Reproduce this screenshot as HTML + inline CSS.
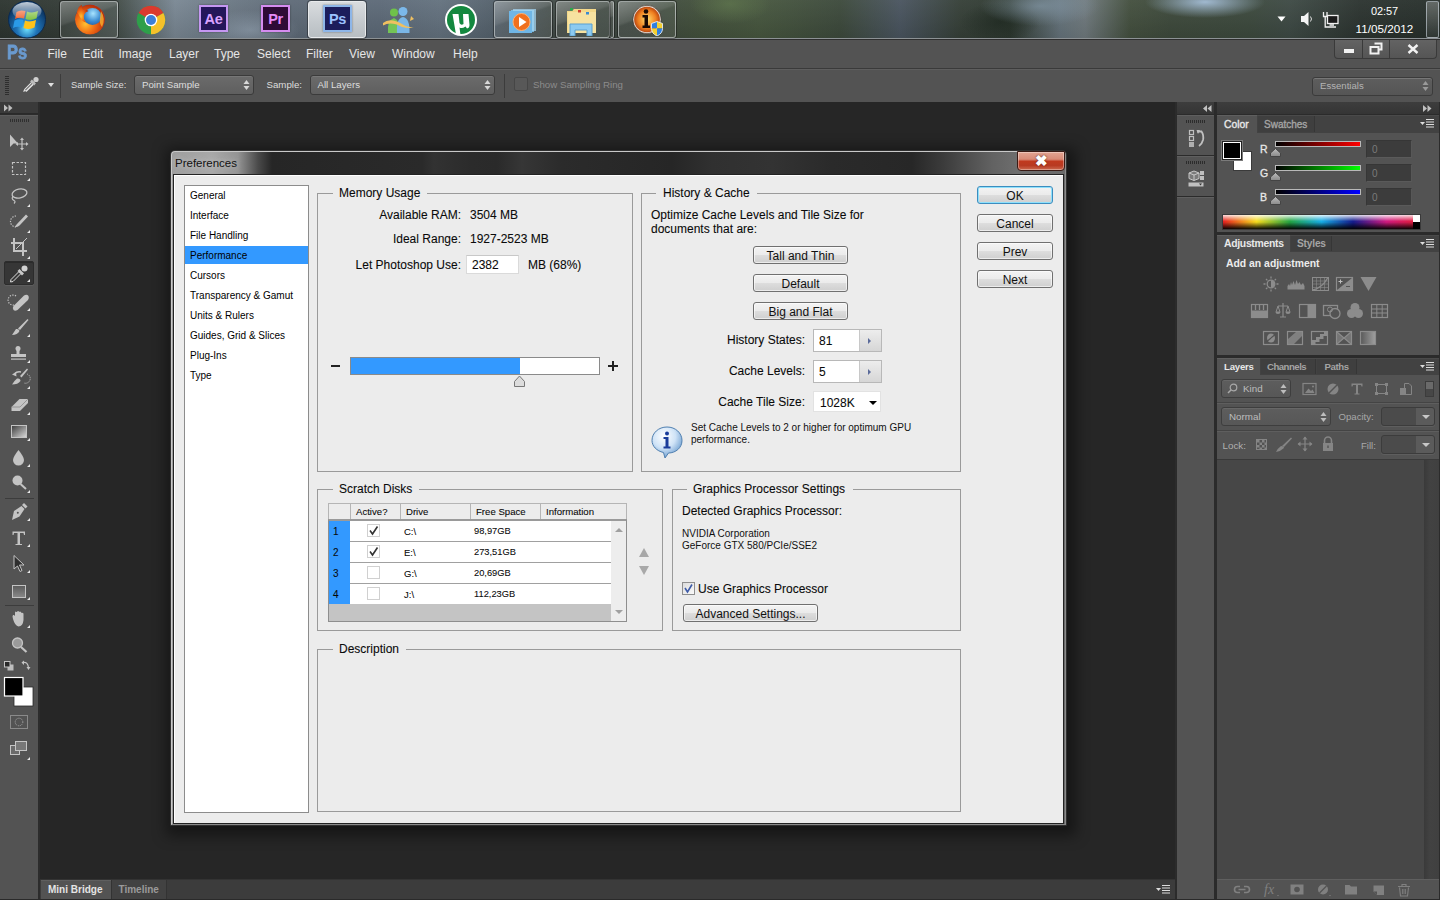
<!DOCTYPE html>
<html><head><meta charset="utf-8">
<style>
*{box-sizing:border-box}
html,body{margin:0;padding:0}
body{width:1440px;height:900px;overflow:hidden;position:relative;background:#262626;font-family:"Liberation Sans",sans-serif;}
.a{position:absolute}
.t{position:absolute;white-space:nowrap;line-height:1}

.gb{border:1px solid #9a9a9a}
.gl{height:14px;background:#ececec}
.dt{font-size:12px;color:#0a0a0a;margin-top:0.8px;-webkit-text-stroke:0.08px #000}
.st{font-size:10px;color:#0a0a0a;-webkit-text-stroke:0.08px #000}
.btn{border:1px solid #707070;border-radius:3px;background:linear-gradient(180deg,#f3f3f3 0%,#ebebeb 48%,#dddddd 52%,#cfcfcf 100%);box-shadow:inset 0 0 0 1px rgba(255,255,255,0.6);text-align:center}
.btn span{position:absolute;left:0;right:0;top:3px;font-size:12px;line-height:1;color:#111;white-space:nowrap}
.cb{width:13px;height:13px;border:1px solid #d0d0d0;background:#fff}

.mt{top:48.2px;font-size:12px;color:#e6e6e6}
.ot{color:#dedede}
.dd{border:1px solid #3b3b3b;border-radius:3px;background:linear-gradient(180deg,#6b6b6b,#5f5f5f);box-shadow:inset 0 1px 0 #777}

.grip{width:20px;height:3px;background:repeating-linear-gradient(90deg,#2c2c2c 0,#2c2c2c 1px,transparent 1px,transparent 2px)}
.tabbar{background:#424242;border-top:1px solid #4a4a4a}
.tabact{background:#535353;border-top:1px solid #5f5f5f}
.tabin{background:#3f3f3f;border-right:1px solid #363636}
.tt{font-size:10px;color:#e8e8e8}
.ti{color:#a4a4a4}
.lt{font-size:10.5px;font-weight:400;color:#e8e8e8;-webkit-text-stroke:0.3px #e8e8e8}
.sl{width:86px;height:6px;border:1px solid #b9b9b9}
.vb{width:46px;height:18px;background:#3c3c3c;border:1px solid #363636;border-bottom-color:#5a5a5a;border-right-color:#575757}
.vt{font-size:10px;color:#7a7a7a}
.ldd{border:1px solid #3e3e3e;border-radius:3px;background:linear-gradient(180deg,#5d5d5d,#575757);box-shadow:inset 0 1px 0 #676767}
.obox{width:54px;height:19px;border:1px solid #3c3c3c;border-radius:3px;background:linear-gradient(90deg,#4b4b4b 0,#4b4b4b 34px,#5b5b5b 34px);box-shadow:0 1px 0 #5e5e5e}
.obox::after{content:"";position:absolute;left:40px;top:7px;border-top:4px solid #c8c8c8;border-left:4px solid transparent;border-right:4px solid transparent}

.tbtn{border:1px solid rgba(210,215,215,0.6);border-radius:3px;box-shadow:0 0 0 1px rgba(0,0,0,0.35);background:linear-gradient(160deg,rgba(255,255,255,0.32) 0%,rgba(255,255,255,0.14) 40%,rgba(255,255,255,0.06) 45%,rgba(255,255,255,0.08) 100%)}
.tbtn.act{border-color:#e8eaec;background:linear-gradient(180deg,#d9dcdf 0%,#c4c9cd 60%,#b8bec2 100%)}
.adb{width:29px;height:27px;border:2px solid;box-shadow:0 0 2px rgba(0,0,0,0.4)}
.adb span{position:absolute;left:0;right:0;top:4.5px;text-align:center;font-size:14.5px;font-weight:700;line-height:1;letter-spacing:-0.3px}
</style></head><body>

<!-- ============ TASKBAR ============ -->
<div class="a" id="taskbar" style="left:0;top:0;width:1440px;height:39px;overflow:hidden;background:#3c4640">
 <div class="a" style="left:0;top:0;width:1440px;height:38px;
 background:
 radial-gradient(ellipse 60px 16px at 1205px 2px,rgba(165,190,215,0.95),rgba(165,190,215,0) 100%),
 radial-gradient(ellipse 60px 20px at 1040px 6px,rgba(130,150,165,0.7),rgba(130,150,165,0) 100%),
 radial-gradient(ellipse 50px 20px at 250px 30px,rgba(150,165,180,0.55),rgba(150,165,180,0) 100%),
 radial-gradient(ellipse 40px 20px at 730px 4px,rgba(100,125,80,0.6),rgba(100,125,80,0) 100%),
 radial-gradient(ellipse 40px 20px at 1000px 22px,rgba(30,40,32,0.7),rgba(30,40,32,0) 100%),
 linear-gradient(180deg,rgba(255,255,255,0.04) 0%,rgba(0,0,0,0.10) 100%),
 linear-gradient(90deg,#2d3530 0px,#333b36 60px,#46504c 120px,#7a8894 175px,#6f7c88 215px,#5f6b78 290px,#5d6a78 380px,#64727f 440px,#56636e 490px,#414a45 560px,#3e4840 640px,#43513c 700px,#47573f 760px,#3d4a3c 840px,#4a5560 900px,#364038 960px,#2f3a31 1010px,#66747c 1060px,#707a7e 1085px,#44503f 1130px,#3e4a3c 1170px,#3d4a3e 1250px,#3e4a45 1290px,#2c3430 1360px,#28302c 1440px);"></div>
 <div class="a" style="left:0;top:38px;width:1440px;height:1px;background:#8c9194"></div>
 <!-- start orb -->
 <svg class="a" style="left:6px;top:0" width="42" height="39" viewBox="0 0 42 39">
  <defs>
   <radialGradient id="orb" cx="50%" cy="75%" r="60%"><stop offset="0" stop-color="#6fe2ff"/><stop offset="0.45" stop-color="#1f74b8"/><stop offset="1" stop-color="#0d3a6a"/></radialGradient>
   <linearGradient id="orbg" x1="0" y1="0" x2="0" y2="1"><stop offset="0" stop-color="#ffffff" stop-opacity="0.75"/><stop offset="1" stop-color="#ffffff" stop-opacity="0.05"/></linearGradient>
  </defs>
  <circle cx="21" cy="19.5" r="18.5" fill="url(#orb)" stroke="#0b2a50" stroke-width="1"/>
  <path d="M10.5 12 Q14 9.5 19.5 11 L18 18.5 Q13 17 9 19 Z" fill="#f0602a"/>
  <path d="M21 11.5 Q26 13.5 32 11 L30.5 18.5 Q25 21 19.5 19 Z" fill="#7cc03a"/>
  <path d="M8.5 20.5 Q13 18.5 17.5 20 L16 27.5 Q11.5 26 7 28 Z" fill="#2a9ae8"/>
  <path d="M19 20.5 Q24 22.5 30 20 L28.5 27.5 Q23.5 30 17.5 28 Z" fill="#ffc21a"/>
  <ellipse cx="21" cy="11" rx="14.5" ry="9" fill="url(#orbg)"/>
 </svg>
 <!-- buttons -->
 <div class="a tbtn" style="left:60px;top:1px;width:58px;height:37px"></div>
 <div class="a tbtn act" style="left:308px;top:1px;width:58px;height:37px"></div>
 <div class="a tbtn" style="left:494px;top:1px;width:58px;height:37px"></div>
 <div class="a tbtn" style="left:556px;top:1px;width:54px;height:37px"></div>
 <div class="a tbtn" style="left:610px;top:1px;width:4px;height:37px;border-left:none"></div>
 <div class="a tbtn" style="left:618px;top:1px;width:58px;height:37px"></div>
 <!-- firefox -->
 <svg class="a" style="left:73px;top:3px" width="33" height="33" viewBox="0 0 33 33">
  <defs><radialGradient id="ffg" cx="60%" cy="30%" r="60%"><stop offset="0" stop-color="#a8e4ff"/><stop offset="0.45" stop-color="#3a8ad0"/><stop offset="1" stop-color="#14306e"/></radialGradient>
  <radialGradient id="ffo" cx="35%" cy="65%" r="65%"><stop offset="0" stop-color="#ffc030"/><stop offset="0.5" stop-color="#f06a14"/><stop offset="1" stop-color="#b8300c"/></radialGradient></defs>
  <circle cx="17" cy="16.5" r="15" fill="url(#ffg)"/>
  <path fill-rule="evenodd" fill="url(#ffo)" d="M17 1.5 A15 15 0 1 1 16.99 1.5 Z M19.5 13.5 m-9 0 a9 8.5 0 1 0 18 0 a9 8.5 0 1 0 -18 0 Z"/>
  <path d="M4 9 Q5 3 9 2 Q8.5 5 10 7 Q13 6 15.5 8 Q12 9 11 12 Q10 16 13 19.5 Q9 18.5 7.5 15 Z" fill="url(#ffo)"/>
  <path d="M28 8 Q33 16 29 24 Q26 20 27 15 Z" fill="#f8b030" opacity="0.8"/>
 </svg>
 <!-- chrome -->
 <svg class="a" style="left:136px;top:5px" width="30" height="30" viewBox="0 0 30 30">
  <circle cx="15" cy="15" r="14.3" fill="#2e9f4a"/>
  <path d="M15 15 L2.6 7.9 A14.3 14.3 0 0 1 27.4 7.9 Z" fill="#dc3a2e"/>
  <path d="M15 15 L27.4 7.9 A14.3 14.3 0 0 1 15 29.3 Z" fill="#f6c12a"/>
  <circle cx="15" cy="15" r="6.3" fill="#fff"/><circle cx="15" cy="15" r="5" fill="#3d7fd8"/>
 </svg>
 <!-- Ae Pr Ps -->
 <div class="a adb" style="left:199px;top:5px;border-color:#c597f2;background:#24165a"><span style="color:#d9a2ff">Ae</span></div>
 <div class="a adb" style="left:261px;top:5px;border-color:#d58cf0;background:#2e0b36"><span style="color:#e58af8">Pr</span></div>
 <div class="a adb" style="left:323px;top:5px;border-color:#8eb6e8;background:#1c1d5c"><span style="color:#9cc2ff">Ps</span></div>
 <!-- messenger -->
 <svg class="a" style="left:382px;top:7px" width="34" height="27" viewBox="0 0 34 27">
  <circle cx="12" cy="5.5" r="4" fill="#6fc24a"/><path d="M6 26 Q5 13 12 11 Q18 13 17.5 26 Z" fill="#74c456"/>
  <circle cx="21" cy="4.5" r="4.5" fill="#7bb8ea"/><path d="M15 26 Q14 11 21 10 Q28 11 27.5 26 Z" fill="#7ab6e6"/>
  <path d="M1 16 Q8 10 20 17 Q27 21 32 20 Q28 22 20 20 Q9 14 1 18.5 Z" fill="#f0c060"/><path d="M29 9 L32 12 L28 14 Z" fill="#f0c060"/>
 </svg>
 <!-- utorrent -->
 <svg class="a" style="left:444px;top:3px" width="34" height="34" viewBox="0 0 34 34">
  <circle cx="17" cy="17" r="16" fill="#fff"/><circle cx="17" cy="17" r="14" fill="#14883f"/>
  <path d="M8.5 11 L14.5 11 L15.5 20 Q17 23 19.5 21 L19 11 L24.5 11 L25.5 22 Q25.5 25 23 25.5 L21.5 23.5 Q18 26 15.5 24.5 L16.5 32 L12 31.5 Z" fill="#fff"/>
 </svg>
 <!-- wmp -->
 <svg class="a" style="left:507px;top:7px" width="32" height="28" viewBox="0 0 32 28">
  <path d="M4 3 H27 V25 H4 Z" fill="#7cc4ef" opacity="0.85"/><path d="M6 2 H29 V24 H6Z" fill="#a7d8f6" opacity="0.7"/><path d="M2 4 H25 V26 H2 Z" fill="#6fb6e6"/>
  <circle cx="14.5" cy="15" r="8.5" fill="#f0701e"/><circle cx="14.5" cy="15" r="8.5" fill="none" stroke="#ffb070" stroke-width="1"/>
  <path d="M12 10 L19.5 15 L12 20 Z" fill="#fff"/>
 </svg>
 <!-- explorer -->
 <svg class="a" style="left:566px;top:7px" width="32" height="29" viewBox="0 0 32 29">
  <path d="M1 4 H6 L8 2 H30 V26 H1 Z" fill="#f3d88a"/><path d="M2 5 H30 V26 H2 Z" fill="#f7e2a0"/>
  <rect x="4" y="1" width="3" height="2.5" fill="#2aa84a"/><rect x="12" y="3" width="3" height="2.5" fill="#d04030"/><rect x="20" y="5" width="3" height="2.5" fill="#3a8ad0"/>
  <path d="M4 29 V17 H26 V29 H21 V23 H9 V29 Z" fill="#8ccaf0" stroke="#5aa0d0" stroke-width="1"/>
 </svg>
 <!-- info -->
 <svg class="a" style="left:631px;top:4px" width="34" height="32" viewBox="0 0 34 32">
  <defs><radialGradient id="inf" cx="50%" cy="50%" r="55%"><stop offset="0" stop-color="#ffe070"/><stop offset="0.6" stop-color="#f08020"/><stop offset="1" stop-color="#a02a08"/></radialGradient></defs>
  <circle cx="16" cy="15.5" r="13.5" fill="url(#inf)" stroke="#e8e0d8" stroke-width="1.3"/>
  <circle cx="15" cy="7.5" r="2.3" fill="#1a0a04"/><path d="M11.5 11 H17 V21.5 H19 V24 H11.5 V21.5 H13.5 V13.5 H11.5Z" fill="#1a0a04"/>
  <defs><clipPath id="shc"><path d="M20.5 19.5 L26 17.5 L31.5 19.5 V24.5 Q31.5 29.5 26 32 Q20.5 29.5 20.5 24.5 Z"/></clipPath></defs>
  <circle cx="16" cy="15.5" r="14.2" fill="none" stroke="#2a1a10" stroke-width="0.8" opacity="0.7"/>
  <g clip-path="url(#shc)"><rect x="20" y="17" width="6" height="7.5" fill="#2f7fe0"/><rect x="26" y="17" width="6" height="7.5" fill="#f4d030"/><rect x="20" y="24.5" width="6" height="8" fill="#f4d030"/><rect x="26" y="24.5" width="6" height="8" fill="#2f7fe0"/></g>
  <path d="M20.5 19.5 L26 17.5 L31.5 19.5 V24.5 Q31.5 29.5 26 32 Q20.5 29.5 20.5 24.5 Z" fill="none" stroke="#e8eef4" stroke-width="0.9"/>
 </svg>
 <!-- tray -->
 <svg class="a" style="left:1277px;top:16px" width="9" height="6"><path d="M0.5 0.5 H8.5 L4.5 5.5Z" fill="#fff"/></svg>
 <svg class="a" style="left:1300px;top:11px" width="14" height="16" viewBox="0 0 14 16"><path d="M1 5 H4 L8.5 1 V15 L4 11 H1Z" fill="#f4f4f4"/><path d="M10.5 5.5 Q12.5 8 10.5 10.5" fill="none" stroke="#e0e0e0" stroke-width="1"/></svg>
 <svg class="a" style="left:1322px;top:11px" width="17" height="17" viewBox="0 0 17 17"><path d="M1.5 1 V5.5 H5 V1 M3.2 5.5 V16 H14 M7.5 14 H12" fill="none" stroke="#f0f0f0" stroke-width="1.3"/><rect x="5.5" y="4.5" width="10.5" height="8" fill="#1a1a1a" stroke="#f0f0f0" stroke-width="1.3"/></svg>
 <div class="t" style="left:1371px;top:6px;font-size:11px;color:#fff;letter-spacing:-0.1px">02:57</div>
 <div class="t" style="left:1355.5px;top:22.5px;font-size:11.7px;color:#fff">11/05/2012</div>
 <div class="a" style="left:1426px;top:1px;width:13px;height:37px;border:1px solid rgba(220,230,240,0.55);border-radius:2px;background:linear-gradient(180deg,rgba(255,255,255,0.25),rgba(255,255,255,0.05))"></div>
</div>
<div class="a" style="left:0;top:39px;width:1440px;height:1px;background:#2e2e2e"></div>

<!-- ============ MENUBAR ============ -->
<div class="a" id="menubar" style="left:0;top:40px;width:1440px;height:28px;background:#535353;"></div>
<div class="a" style="left:0;top:68px;width:1440px;height:1px;background:#3a3a3a"></div>

<!-- ============ OPTIONS BAR ============ -->
<div class="a" id="optbar" style="left:0;top:69px;width:1440px;height:33px;background:#535353;border-top:1px solid #5e5e5e"></div>


<!-- menubar content -->
<div class="t" style="left:7px;top:41.7px;font-size:20.5px;font-weight:700;color:#6a9acf;-webkit-text-stroke:0.8px #6a9acf;transform:scaleX(0.8);transform-origin:0 0">Ps</div>
<div class="t mt" style="left:47.5px">File</div>
<div class="t mt" style="left:82.5px">Edit</div>
<div class="t mt" style="left:118.5px">Image</div>
<div class="t mt" style="left:169px">Layer</div>
<div class="t mt" style="left:214px">Type</div>
<div class="t mt" style="left:257px">Select</div>
<div class="t mt" style="left:306px">Filter</div>
<div class="t mt" style="left:349px">View</div>
<div class="t mt" style="left:392px">Window</div>
<div class="t mt" style="left:453px">Help</div>
<div class="a" style="left:1334px;top:40px;width:103px;height:19px;border:1px solid #3a3a3a;border-top:none;border-radius:0 0 4px 4px;background:linear-gradient(180deg,#636363,#555555)"></div>
<div class="a" style="left:1362px;top:40px;width:1px;height:18px;background:#3a3a3a"></div>
<div class="a" style="left:1389px;top:40px;width:1px;height:18px;background:#3a3a3a"></div>
<div class="a" style="left:1344px;top:49px;width:10px;height:4px;background:#f2f2f2"></div>
<svg class="a" style="left:1369px;top:42px" width="14" height="13" viewBox="0 0 14 13"><path d="M5.5 1.5 H12.5 V7.5 H10" fill="none" stroke="#f2f2f2" stroke-width="2"/><rect x="1.5" y="5" width="8" height="6.5" fill="none" stroke="#f2f2f2" stroke-width="2"/></svg>
<svg class="a" style="left:1407px;top:44px" width="12" height="10" viewBox="0 0 12 10"><path d="M1.5 1 L10.5 9 M10.5 1 L1.5 9" stroke="#f2f2f2" stroke-width="2.4"/></svg>

<!-- options bar content -->
<div class="a" style="left:5px;top:76px;width:4px;height:20px;background:repeating-linear-gradient(180deg,#2e2e2e 0,#2e2e2e 1px,transparent 1px,transparent 2px)"></div>
<svg class="a" style="left:22px;top:75px" width="18" height="18" viewBox="0 0 18 18"><path d="M2.5 15.5 L10 8 M4 16.5 L11 9.5" stroke="#d8d8d8" stroke-width="1.3"/><path d="M2 16 L3 14 L10.5 6.5 L12 8 L4.5 15.5 Z" fill="#555" stroke="#e0e0e0" stroke-width="1.1"/><path d="M9 5.5 L13 9.5" stroke="#bdbdbd" stroke-width="2.5"/><circle cx="14" cy="4.5" r="2.6" fill="#cfcfcf"/></svg>
<div class="a" style="left:48px;top:83px;width:0;height:0;border-top:4px solid #e0e0e0;border-left:3.5px solid transparent;border-right:3.5px solid transparent"></div>
<div class="a" style="left:60px;top:74px;width:1px;height:24px;background:#3c3c3c"></div>
<div class="t ot" style="left:71px;top:80px;font-size:9.4px">Sample Size:</div>
<div class="a dd" style="left:134px;top:75px;width:120px;height:20px"></div>
<div class="t ot" style="left:142px;top:80px;font-size:9.7px">Point Sample</div>
<svg class="a ud" style="left:243px;top:79px" width="7" height="12"><path d="M0.5 5 L3.5 1 L6.5 5 Z M0.5 7 L3.5 11 L6.5 7 Z" fill="#d8d8d8"/></svg>
<div class="t ot" style="left:266.5px;top:80px;font-size:9.7px">Sample:</div>
<div class="a dd" style="left:310px;top:75px;width:185px;height:20px"></div>
<div class="t ot" style="left:317.5px;top:80px;font-size:9.7px">All Layers</div>
<svg class="a ud" style="left:484px;top:79px" width="7" height="12"><path d="M0.5 5 L3.5 1 L6.5 5 Z M0.5 7 L3.5 11 L6.5 7 Z" fill="#d8d8d8"/></svg>
<div class="a" style="left:504px;top:74px;width:1px;height:24px;background:#3c3c3c"></div>
<div class="a" style="left:514px;top:77px;width:14px;height:14px;border:1px solid #464646;border-radius:2px;background:#585858"></div>
<div class="t ot" style="left:533px;top:80px;font-size:9.7px;color:#8c8c8c">Show Sampling Ring</div>
<div class="a dd" style="left:1312px;top:77px;width:121px;height:19px;background:linear-gradient(180deg,#5e5e5e,#555)"></div>
<div class="t ot" style="left:1320px;top:81px;font-size:9.6px;color:#b4b4b4">Essentials</div>
<svg class="a ud" style="left:1422px;top:80px" width="7" height="12"><path d="M0.5 5 L3.5 1 L6.5 5 Z M0.5 7 L3.5 11 L6.5 7 Z" fill="#9a9a9a"/></svg>
<!-- ============ LEFT TOOLBAR ============ -->
<div class="a" style="left:0;top:102px;width:40px;height:798px;background:#2c2c2c"></div>
<div class="a" id="tbhead" style="left:0;top:102px;width:38px;height:12px;background:#3a3a3a;border-bottom:1px solid #2a2a2a"></div>
<div class="a" id="toolbar" style="left:0;top:115px;width:38px;height:785px;background:#535353;border-top:1px solid #5d5d5d"></div>


<!-- toolbar content -->
<svg class="a" style="left:0;top:102px" width="40" height="660" viewBox="0 102 40 660">
 <g fill="#c4c4c4" stroke="none">
  <!-- head arrows -->
  <path d="M4 104.5 L8 108 L4 111.5 Z M8.5 104.5 L12.5 108 L8.5 111.5 Z" fill="#bdbdbd"/>
  <!-- grip -->
  <path d="M10 119 h1 v3 h-1z M12 119 h1 v3 h-1z M14 119 h1 v3 h-1z M16 119 h1 v3 h-1z M18 119 h1 v3 h-1z M20 119 h1 v3 h-1z M22 119 h1 v3 h-1z M24 119 h1 v3 h-1z M26 119 h1 v3 h-1z M28 119 h1 v3 h-1z" fill="#2f2f2f"/>
  <!-- move -->
  <path d="M10 134.5 L10 147 L13.5 143.5 L18 143.5 Z"/>
  <path d="M22 139 v10 M17 144 h10" stroke="#c4c4c4" stroke-width="1.2"/>
  <path d="M22 137.5 l-2 2.5 h4z M22 150.5 l-2 -2.5 h4z M15.5 144 l2.5 -2 v4z M28.5 144 l-2.5 -2 v4z"/>
  <!-- marquee -->
  <rect x="12.5" y="162.5" width="13" height="12" fill="none" stroke="#c4c4c4" stroke-width="1.2" stroke-dasharray="2.5 1.5"/>
  <!-- lasso -->
  <ellipse cx="19.5" cy="193.5" rx="7.5" ry="4.5" fill="none" stroke="#c4c4c4" stroke-width="1.3" transform="rotate(-12 19.5 193.5)"/>
  <path d="M13 196 q-2 3 1 4.5 q2 1 0 3" fill="none" stroke="#c4c4c4" stroke-width="1.2"/>
  <!-- quick select -->
  <path d="M16 216 a5.5 5.5 0 1 0 0 11" fill="none" stroke="#c4c4c4" stroke-width="1.2" stroke-dasharray="1.3 1.3"/>
  <path d="M17 224 L26 214.5 L28 216.5 L19.5 225.5 Q16 228 15 226.5 Z"/>
  <!-- crop -->
  <path d="M14 238 V251 H27 M11 243 H23 V256" fill="none" stroke="#c4c4c4" stroke-width="2"/>
  <path d="M16 249 L27 238" stroke="#c4c4c4" stroke-width="1"/>
  <!-- eyedropper selected bg -->
  <!-- heal -->
  <path d="M16 296 a5 5 0 1 0 -2 9" fill="none" stroke="#c4c4c4" stroke-width="1.2" stroke-dasharray="1.3 1.3"/>
  <path d="M13.5 306 L24 295.5 Q27 294 28.5 296 Q29.5 298.5 28 300 L17.5 310 Q15 311.5 13.5 310 Q12 308.5 13.5 306 Z"/>
  <!-- brush -->
  <g transform="translate(0 3)"><path d="M18 325.5 L27.5 316 L28.5 317 L20 327 Z"/>
  <path d="M12 332 Q14 329 16 326 Q19 325.5 19.5 328 Q17.5 332 12 332 Z"/></g>
  <!-- stamp -->
  <g transform="translate(0 2)"><circle cx="18" cy="346.5" r="2.5"/><rect x="16.5" y="348" width="3" height="4"/><rect x="11" y="352" width="15" height="3"/><rect x="11" y="356.5" width="15" height="1.2"/></g>
  <!-- history brush -->
  <path d="M20 376 L27 368.5 L28 369.5 L21.5 377.5 Z"/><path d="M12 384.5 Q14 381 17 378.5 Q20.5 378 20.5 381 Q18 384.5 12 384.5 Z"/>
  <path d="M21 372 Q17 371 14.5 374" fill="none" stroke="#c4c4c4" stroke-width="1.3"/><path d="M12 374.5 L16 372 L16.5 376.5 Z"/>
  <path d="M27 374 a4 4 0 0 1 -3 9" fill="none" stroke="#c4c4c4" stroke-width="1" stroke-dasharray="1 1"/>
  <!-- eraser -->
  <path d="M11.5 407 L19.5 399 L28 399 L28 403 L20 411 L11.5 411 Z"/>
  <path d="M11.5 407 L20 407 L28 399" fill="none" stroke="#8a8a8a" stroke-width="0.8"/>
  <!-- gradient -->
  <defs><linearGradient id="gr" x1="0" y1="0" x2="1" y2="1"><stop offset="0" stop-color="#3a3a3a"/><stop offset="1" stop-color="#dcdcdc"/></linearGradient>
  <linearGradient id="gr2" x1="0" y1="0" x2="0" y2="1"><stop offset="0" stop-color="#5a5a5a"/><stop offset="1" stop-color="#8a8a8a"/></linearGradient></defs>
  <rect x="11.5" y="425.5" width="15" height="12" fill="url(#gr)" stroke="#c4c4c4" stroke-width="1"/>
  <!-- drop -->
  <path d="M18.5 450 Q13 457 13 460 A5.5 5.5 0 0 0 24 460 Q24 457 18.5 450 Z"/>
  <!-- dodge -->
  <circle cx="17.5" cy="480.5" r="5"/><path d="M20.5 484 L26 489" stroke="#c4c4c4" stroke-width="2"/>
  <!-- sep -->
  <rect x="5" y="498" width="29" height="1" fill="#3c3c3c"/>
  <!-- pen -->
  <path d="M12 520 L14 511 L21.5 506 L24.5 509 L19.5 516.5 Z"/><path d="M22 505 L24 503 L27.5 506.5 L25.5 508.5 Z"/><circle cx="17.8" cy="512.8" r="1" fill="#535353"/>
  <!-- type -->
  <path d="M12.5 531.5 H25 V535 H24 L23.5 533 H20 V544 H22 V545 H15.5 V544 H17.5 V533 H14 L13.5 535 H12.5 Z"/>
  <!-- path select -->
  <path d="M14 555.5 V569 L17.5 566 L20 571.5 L22 570.5 L19.5 565 L24 565 Z" fill="#2e2e2e" stroke="#c4c4c4" stroke-width="1"/>
  <!-- rect -->
  <rect x="12.5" y="585.5" width="13" height="12" fill="url(#gr2)" stroke="#c4c4c4" stroke-width="1"/>
  <rect x="5" y="605" width="29" height="1" fill="#3c3c3c"/>
  <!-- hand -->
  <path d="M13 619 Q12 616 13 615 Q14 614.5 15 616 L15 612.5 Q15.5 611 16.5 612 L17 612 Q17.5 610.5 18.5 611 L19 612 Q20 611 21 612 L21.5 613 Q22.5 612.5 23.5 613.5 L23.5 620 Q23 626 18.5 626.5 Q15 626 13 619 Z"/>
  <!-- zoom -->
  <circle cx="17.5" cy="643" r="5" fill="#9a9a9a" stroke="#c4c4c4" stroke-width="1.3"/><path d="M21 647 L26.5 652" stroke="#c4c4c4" stroke-width="2.2"/>
  <!-- default colors -->
  <rect x="7.5" y="664.5" width="6" height="6" fill="#bdbdbd"/><rect x="4.5" y="661.5" width="5.5" height="5.5" fill="#2a2a2a" stroke="#c4c4c4" stroke-width="1"/>
  <path d="M23 662.5 Q28 661.5 28.5 668" fill="none" stroke="#c4c4c4" stroke-width="1.2"/><path d="M21.5 662.5 L24 660.5 L24 665z M26.5 667 L30.5 667 L28.5 670z"/>
  <!-- fg/bg -->
  <rect x="14" y="687" width="19" height="19" fill="#fff" stroke="#2a2a2a" stroke-width="0.8"/>
  <rect x="4.5" y="677.5" width="18.5" height="18.5" fill="#000" stroke="#fff" stroke-width="1.2"/>
  <!-- quick mask -->
  <rect x="10.5" y="715.5" width="17" height="13" fill="none" stroke="#8a8a8a" stroke-width="1"/><circle cx="19" cy="722" r="3.8" fill="none" stroke="#a8a8a8" stroke-width="1" stroke-dasharray="1 1"/>
  <!-- screen mode -->
  <rect x="10.5" y="745.5" width="9" height="9" fill="#6a6a6a" stroke="#c4c4c4" stroke-width="1"/><rect x="15.5" y="741.5" width="11" height="9" fill="#777" stroke="#c4c4c4" stroke-width="1"/>
 </g>
 <g fill="#e8e8e8">
  <path d="M30 178 l-3 3 h3z M30 204 l-3 3 h3z M30 230 l-3 3 h3z M30 256 l-3 3 h3z M30 308 l-3 3 h3z M30 334 l-3 3 h3z M30 360 l-3 3 h3z M30 386 l-3 3 h3z M30 412 l-3 3 h3z M30 438 l-3 3 h3z M30 464 l-3 3 h3z M30 490 l-3 3 h3z M30 518 l-3 3 h3z M30 544 l-3 3 h3z M30 570 l-3 3 h3z M30 597 l-3 3 h3z M30 625 l-3 3 h3z M30 757 l-3 3 h3z"/>
 </g>
</svg>
<div class="a" style="left:4px;top:261px;width:30px;height:24px;border-radius:2px;background:#363636;border:1px solid #2c2c2c;box-shadow:inset 0 1px 0 #2a2a2a, 0 1px 0 #5e5e5e"></div>
<svg class="a" style="left:4px;top:261px" width="30" height="24" viewBox="4 261 30 24">
 <path d="M11 281 L20 272" stroke="#d8d8d8" stroke-width="1.2"/><path d="M10.5 282 L11 279.5 L19 271.5 L21 273.5 L13 281.5 Z" fill="#3a3a3a" stroke="#dcdcdc" stroke-width="1"/>
 <path d="M18.5 270 L23 274.5" stroke="#c8c8c8" stroke-width="2.8"/><circle cx="24.5" cy="268.5" r="3" fill="#d0d0d0"/>
 <path d="M30 279 l-3 3 h3z" fill="#e8e8e8"/>
</svg>
<!-- ============ RIGHT DOCK ============ -->
<div class="a" style="left:1175px;top:102px;width:265px;height:798px;background:#2b2b2b"></div>
<div class="a" style="left:1177px;top:102px;width:37px;height:12px;background:linear-gradient(180deg,#3d3d3d,#353535)"></div>
<div class="a" style="left:1217px;top:102px;width:223px;height:12px;background:linear-gradient(180deg,#3d3d3d,#353535)"></div>
<svg class="a" style="left:1203px;top:105px" width="9" height="7"><path d="M4 0 L0 3.5 L4 7Z M8.5 0 L4.5 3.5 L8.5 7Z" fill="#c0c0c0"/></svg>
<svg class="a" style="left:1423px;top:105px" width="9" height="7"><path d="M0 0 L4 3.5 L0 7Z M4.5 0 L8.5 3.5 L4.5 7Z" fill="#c0c0c0"/></svg>
<!-- dock column -->
<div class="a" style="left:1177px;top:115px;width:37px;height:40px;background:#535353;border-top:1px solid #5f5f5f"></div>
<div class="a" style="left:1177px;top:156px;width:37px;height:40px;background:#535353;border-top:1px solid #5f5f5f"></div>
<div class="a" style="left:1177px;top:197px;width:37px;height:703px;background:#535353;border-top:1px solid #5f5f5f"></div>
<div class="a grip" style="left:1186px;top:120px"></div>
<div class="a grip" style="left:1186px;top:161px"></div>
<svg class="a" style="left:1188px;top:129px" width="18" height="19" viewBox="0 0 18 19"><rect x="1.5" y="1.5" width="4" height="4" fill="none" stroke="#c0c0c0" stroke-width="1.2"/><rect x="1.5" y="7.5" width="4" height="4" fill="none" stroke="#c0c0c0" stroke-width="1.2"/><rect x="1" y="13" width="5" height="5" fill="#b0b0b0"/><path d="M9 2.5 H13.5 Q16 6 15 11 Q14 15 11 17" fill="none" stroke="#c0c0c0" stroke-width="1.8"/><path d="M8.5 1 L12 1 L10 5 Z" fill="#c0c0c0"/></svg>
<svg class="a" style="left:1188px;top:170px" width="18" height="18" viewBox="0 0 18 18"><path d="M6 1 L11 3 L11 8.5 L6 10.5 L1 8.5 L1 3 Z" fill="#7a7a7a" stroke="#c8c8c8" stroke-width="1"/><path d="M1 3 L6 5 L11 3 M6 5 V10.5" stroke="#c8c8c8" stroke-width="1" fill="none"/><rect x="12" y="1" width="4" height="4" fill="#c0c0c0"/><rect x="12" y="6" width="4" height="4" fill="#c0c0c0"/><rect x="0.5" y="12.5" width="15" height="4" fill="#c0c0c0"/><path d="M11 13.5 L14 13.5 L12.5 15.5Z" fill="#333"/></svg>

<!-- ===== Color panel ===== -->
<div class="a tabbar" style="left:1217px;top:115px;width:222px;height:18px"></div>
<div class="a tabact" style="left:1217px;top:115px;width:40px;height:18px"></div>
<div class="a tabin" style="left:1258px;top:116px;width:57px;height:16px"></div>
<div class="t tt" style="left:1224px;top:119.5px;font-size:10.3px;-webkit-text-stroke:0.35px #e8e8e8">Color</div>
<div class="t tt ti" style="left:1264px;top:119.5px;-webkit-text-stroke:0.35px #a4a4a4">Swatches</div>
<svg class="a pm" style="left:1420px;top:119px" width="15" height="9"><path d="M0 3 L5 3 L2.5 6Z" fill="#dcdcdc"/><path d="M6 0.5 H14 M6 3 H14 M6 5.5 H14 M6 8 H14" stroke="#dcdcdc" stroke-width="1"/></svg>
<div class="a" style="left:1217px;top:133px;width:222px;height:99px;background:#535353"></div>
<div class="a" style="left:1233px;top:151px;width:19px;height:20px;background:#fff;border:1px solid #3a3a3a"></div>
<div class="a" style="left:1221px;top:140px;width:22px;height:21px;border:1px solid #7a7a7a;background:#000;box-shadow:inset 0 0 0 1px #1a1a1a, inset 0 0 0 2px #fff"></div>
<div class="a" style="left:1223px;top:142px;width:18px;height:17px;background:#000;border:1px solid #fff;box-shadow:0 0 0 1px #222"></div>
<div class="t lt" style="left:1260px;top:144px">R</div>
<div class="t lt" style="left:1260px;top:168px">G</div>
<div class="t lt" style="left:1260px;top:192px">B</div>
<div class="a sl" style="left:1275px;top:141px;background:linear-gradient(90deg,#000,#ff0000)"></div>
<div class="a sl" style="left:1275px;top:165px;background:linear-gradient(90deg,#000,#00ff00)"></div>
<div class="a sl" style="left:1275px;top:189px;background:linear-gradient(90deg,#000,#0000ff)"></div>
<svg class="a" style="left:1270px;top:148px" width="11" height="9"><path d="M5.5 0.5 L10.5 5 V8.5 H0.5 V5 Z" fill="url(#thg)" stroke="#444" stroke-width="1"/><defs><linearGradient id="thg" x1="0" y1="0" x2="0" y2="1"><stop offset="0" stop-color="#bdbdbd"/><stop offset="1" stop-color="#8a8a8a"/></linearGradient></defs></svg>
<svg class="a" style="left:1270px;top:172px" width="11" height="9"><path d="M5.5 0.5 L10.5 5 V8.5 H0.5 V5 Z" fill="url(#thg)" stroke="#444" stroke-width="1"/></svg>
<svg class="a" style="left:1270px;top:196px" width="11" height="9"><path d="M5.5 0.5 L10.5 5 V8.5 H0.5 V5 Z" fill="url(#thg)" stroke="#444" stroke-width="1"/></svg>
<div class="a vb" style="left:1366px;top:140px"></div>
<div class="a vb" style="left:1366px;top:164px"></div>
<div class="a vb" style="left:1366px;top:188px"></div>
<div class="t vt" style="left:1372px;top:145px">0</div>
<div class="t vt" style="left:1372px;top:169px">0</div>
<div class="t vt" style="left:1372px;top:193px">0</div>
<div class="a" style="left:1222px;top:214px;width:199px;height:16px;border:1px solid #3a3a3a;background:linear-gradient(180deg,rgba(255,255,255,0.85) 0%,rgba(255,255,255,0) 45%,rgba(0,0,0,0) 50%,rgba(0,0,0,0.95) 100%),linear-gradient(90deg,#e82020 0%,#f6dc1e 17%,#24a443 34%,#18aee6 50%,#141c8c 66%,#d01a80 83%,#e41e30 100%)"></div>
<div class="a" style="left:1413px;top:215px;width:7px;height:7px;background:#fff"></div>
<div class="a" style="left:1413px;top:222px;width:7px;height:7px;background:#000"></div>
<div class="a" style="left:1217px;top:232px;width:222px;height:3px;background:#2b2b2b"></div>

<!-- ===== Adjustments panel ===== -->
<div class="a tabbar" style="left:1217px;top:235px;width:222px;height:17px"></div>
<div class="a tabact" style="left:1217px;top:235px;width:73px;height:17px"></div>
<div class="a tabin" style="left:1291px;top:236px;width:41px;height:15px"></div>
<div class="t tt" style="left:1224px;top:238.6px;font-size:10.4px;font-weight:700;letter-spacing:-0.3px">Adjustments</div>
<div class="t tt ti" style="left:1297px;top:238.6px;font-weight:700;font-size:10.2px;letter-spacing:-0.2px">Styles</div>
<svg class="a pm" style="left:1420px;top:239px" width="15" height="9"><path d="M0 3 L5 3 L2.5 6Z" fill="#dcdcdc"/><path d="M6 0.5 H14 M6 3 H14 M6 5.5 H14 M6 8 H14" stroke="#dcdcdc" stroke-width="1"/></svg>
<div class="a" style="left:1217px;top:252px;width:222px;height:103px;background:#535353"></div>
<div class="t" style="left:1226px;top:259px;font-size:10.4px;font-weight:700;color:#ececec">Add an adjustment</div>
<svg class="a" style="left:1217px;top:252px" width="222" height="103" viewBox="1217 252 222 103">
 <g fill="#8c8c8c" stroke="#8c8c8c">
  <!-- row1 -->
  <circle cx="1271" cy="284" r="3.8" fill="none" stroke-width="1.3"/><path d="M1271 284 v-3.8 a3.8 3.8 0 0 1 0 7.6z" stroke="none"/>
  <path d="M1271 276.5v2 M1271 289.5v2 M1263.5 284h2 M1276.5 284h2 M1266 279l1.4 1.4 M1274.6 287.6l1.4 1.4 M1266 289l1.4-1.4 M1274.6 280.4l1.4-1.4" stroke-width="1.3"/>
  <path d="M1287.5 289.5 V286 L1289 284 L1290 286 L1291 282 L1292 285 L1293.5 281 L1295 285 L1296.5 280 L1298 284 L1299.5 282 L1301 285 L1303 283 L1304.5 286 V289.5 Z" stroke="none"/>
  <rect x="1312.5" y="277.5" width="16" height="13" fill="none" stroke-width="1"/><path d="M1312.5 284h16 M1320.5 277.5v13 M1316.5 277.5v13 M1324.5 277.5v13 M1312.5 281h16 M1312.5 287.5h16" stroke-width="0.6"/><path d="M1313 290 Q1322 288 1328 277.5" fill="none" stroke-width="1.4"/>
  <rect x="1336.5" y="277.5" width="16" height="13" fill="none" stroke-width="1.2"/><path d="M1337 290 L1352 278 L1352 290 Z" stroke="none"/><path d="M1338.5 281.5h4 M1340.5 279.5v4" stroke="#c0c0c0" stroke-width="1"/><path d="M1346 286.5h4" stroke="#535353" stroke-width="1"/>
  <path d="M1360.5 277 H1376.5 L1368.5 291 Z" stroke="none"/>
  <!-- row2 -->
  <rect x="1251.5" y="304.5" width="16" height="13" fill="none" stroke-width="1.2"/><path d="M1252 310.5h15.5v7h-15.5z" stroke="none"/><path d="M1255.5 305v5 M1259.5 305v5 M1263.5 305v5" stroke-width="1.3"/>
  <path d="M1283 303v14 M1278 306h10 M1280 317h6" stroke-width="1.2" fill="none"/><path d="M1276 312 l2-6 l2 6z M1286 312 l2-6 l2 6z" fill="none" stroke-width="1"/><path d="M1275.5 312a2.5 2 0 0 0 5 0z M1285.5 312a2.5 2 0 0 0 5 0z" stroke="none"/>
  <rect x="1299.5" y="304.5" width="16" height="13" fill="none" stroke-width="1.2"/><rect x="1307.5" y="304.5" width="8" height="13" stroke="none"/>
  <rect x="1323.5" y="305.5" width="14" height="10" fill="none" stroke-width="1.3"/><circle cx="1335" cy="313.5" r="5" fill="#535353" stroke-width="1.3"/><circle cx="1330" cy="309.5" r="2.5" fill="none" stroke-width="1"/>
  <circle cx="1355" cy="307.5" r="4.5" stroke="none"/><circle cx="1351.5" cy="313.5" r="4.5" stroke="none"/><circle cx="1358.5" cy="313.5" r="4.5" stroke="none"/>
  <rect x="1371.5" y="304.5" width="16" height="13" fill="none" stroke-width="1.2"/><path d="M1371.5 309h16 M1371.5 313h16 M1376.8 304.5v13 M1382.2 304.5v13" stroke-width="1"/>
  <!-- row3 -->
  <rect x="1263.5" y="331.5" width="15" height="13" fill="none" stroke-width="1.2"/><ellipse cx="1271" cy="338" rx="4" ry="4.5" stroke="none"/><path d="M1265 343 L1277 333" stroke="#535353" stroke-width="1.2"/>
  <rect x="1287.5" y="331.5" width="15" height="13" fill="none" stroke-width="1.2"/><path d="M1288 339 L1296 332 L1302 332 L1302 336 L1294 344 L1288 344Z" stroke="none" opacity="0.8"/>
  <rect x="1311.5" y="331.5" width="16" height="13" fill="none" stroke-width="1.2"/><path d="M1312 340 h4 v-3 h4 v-3 h4 v-2.5 h3.5 v4.5 h-4 v3 h-4 v3 h-4 v2 h-3.5z" stroke="none"/>
  <rect x="1336.5" y="331.5" width="15" height="13" fill="none" stroke-width="1.2"/><path d="M1337 332 L1351 344 M1351 332 L1337 344" stroke-width="1.1"/><path d="M1337 332 L1344 338 L1337 344Z M1351 332 L1344 338 L1351 344Z" stroke="none" opacity="0.6"/>
  <rect x="1360.5" y="331.5" width="15" height="13" fill="url(#adg)" stroke-width="1.2"/>
 </g>
 <defs><linearGradient id="adg" x1="0" y1="0" x2="1" y2="0"><stop offset="0" stop-color="#595959"/><stop offset="1" stop-color="#a0a0a0"/></linearGradient></defs>
</svg>
<div class="a" style="left:1217px;top:355px;width:222px;height:3px;background:#2b2b2b"></div>

<!-- ===== Layers panel ===== -->
<div class="a tabbar" style="left:1217px;top:358px;width:222px;height:17px"></div>
<div class="a tabact" style="left:1217px;top:358px;width:43px;height:17px"></div>
<div class="a tabin" style="left:1261px;top:359px;width:55px;height:15px"></div>
<div class="a tabin" style="left:1317px;top:359px;width:40px;height:15px"></div>
<div class="t tt" style="left:1224px;top:361.7px;font-size:9.6px;font-weight:700;letter-spacing:-0.2px">Layers</div>
<div class="t tt ti" style="left:1267px;top:361.7px;font-size:9.6px;font-weight:700;letter-spacing:-0.5px">Channels</div>
<div class="t tt ti" style="left:1324.5px;top:361.7px;font-size:9.6px;font-weight:700;letter-spacing:-0.4px">Paths</div>
<svg class="a pm" style="left:1420px;top:362px" width="15" height="9"><path d="M0 3 L5 3 L2.5 6Z" fill="#dcdcdc"/><path d="M6 0.5 H14 M6 3 H14 M6 5.5 H14 M6 8 H14" stroke="#dcdcdc" stroke-width="1"/></svg>
<div class="a" style="left:1217px;top:375px;width:222px;height:85px;background:#535353"></div>
<div class="a" style="left:1217px;top:402px;width:222px;height:1px;background:#444"></div>
<div class="a" style="left:1217px;top:403px;width:222px;height:1px;background:#5e5e5e"></div>
<div class="a" style="left:1217px;top:430px;width:222px;height:1px;background:#444"></div>
<div class="a" style="left:1217px;top:431px;width:222px;height:1px;background:#5e5e5e"></div>
<div class="a ldd" style="left:1221px;top:379px;width:70px;height:19px"></div>
<svg class="a" style="left:1227px;top:383px" width="11" height="11"><circle cx="6.5" cy="4.5" r="3.3" fill="none" stroke="#a8a8a8" stroke-width="1.2"/><path d="M4.2 6.8 L1 10" stroke="#a8a8a8" stroke-width="1.5"/></svg>
<div class="t" style="left:1243px;top:384px;font-size:9.8px;color:#bdbdbd">Kind</div>
<svg class="a" style="left:1280px;top:383px" width="7" height="12"><path d="M0.5 5 L3.5 1 L6.5 5 Z M0.5 7 L3.5 11 L6.5 7 Z" fill="#bdbdbd"/></svg>
<svg class="a" style="left:1300px;top:380px" width="140" height="20" viewBox="1300 380 140 20">
 <g fill="#858585" stroke="#858585">
  <rect x="1303" y="383.5" width="13" height="11" fill="none" stroke-width="1.2"/><path d="M1305 393 L1308.5 388.5 L1311 391 L1312.5 389.5 L1314.5 393Z" stroke="none"/><circle cx="1313" cy="386.5" r="1" stroke="none"/>
  <circle cx="1333" cy="389" r="5.5" stroke="none"/><path d="M1329 393 L1337 385" stroke="#535353" stroke-width="1.4"/>
  <path d="M1351.5 383.5 H1362.5 V386.5 H1361.5 L1361 385 H1358 V393.5 H1359.5 V394.5 H1354.5 V393.5 H1356 V385 H1353 L1352.5 386.5 H1351.5Z" stroke="none"/>
  <rect x="1376.5" y="384.5" width="10" height="9" fill="none" stroke-width="1"/><rect x="1375" y="383" width="3" height="3" stroke="none"/><rect x="1385" y="383" width="3" height="3" stroke="none"/><rect x="1375" y="392" width="3" height="3" stroke="none"/><rect x="1385" y="392" width="3" height="3" stroke="none"/>
  <path d="M1404.5 383.5 H1409 L1411.5 386 V394.5 H1404.5Z" fill="none" stroke-width="1"/><rect x="1400" y="388" width="6" height="7" stroke="none"/>
 </g>
</svg>
<div class="a" style="left:1425px;top:381px;width:9px;height:16px;border:1px solid #3c3c3c;background:linear-gradient(180deg,#6a6a6a 0,#6a6a6a 50%,#474747 50%)"></div>
<div class="a ldd" style="left:1221px;top:407px;width:110px;height:19px"></div>
<div class="t" style="left:1229px;top:412px;font-size:9.8px;color:#bdbdbd">Normal</div>
<svg class="a" style="left:1320px;top:411px" width="7" height="12"><path d="M0.5 5 L3.5 1 L6.5 5 Z M0.5 7 L3.5 11 L6.5 7 Z" fill="#bdbdbd"/></svg>
<div class="t" style="left:1338.5px;top:412px;font-size:9.6px;color:#a8a8a8">Opacity:</div>
<div class="a obox" style="left:1381px;top:407px"></div>
<div class="t" style="left:1222.5px;top:441px;font-size:9.8px;color:#b0b0b0">Lock:</div>
<svg class="a" style="left:1250px;top:436px" width="90" height="18" viewBox="1250 436 90 18">
 <g fill="#858585" stroke="#858585">
  <rect x="1256.5" y="439.5" width="10" height="10" fill="none" stroke-width="1"/><path d="M1257 440h2.5v2.5h-2.5z M1262 440h2.5v2.5h-2.5z M1259.5 442.5h2.5v2.5h-2.5z M1264.5 442.5h2v2.5h-2z M1257 445h2.5v2.5h-2.5z M1262 445h2.5v2.5h-2.5z M1259.5 447.5h2.5v2h-2.5z M1264.5 447.5h2v2h-2z" stroke="none"/>
  <path d="M1282 446 L1291 437.5 L1292 438.5 L1284 447 Z" stroke="none"/><path d="M1276 452 Q1278 448 1281 446 Q1284 446 1284 448 Q1281 451 1276 452Z" stroke="none"/>
  <path d="M1305 437v14 M1298 444h14" stroke-width="1.2" fill="none"/><path d="M1305 436.5l-2.5 3h5z M1305 451.5l-2.5 -3h5z M1297.5 444l3 -2.5v5z M1312.5 444l-3 -2.5v5z" stroke="none"/>
  <path d="M1324.5 443 V440.5 A3.5 3.5 0 0 1 1331.5 440.5 V443" fill="none" stroke-width="1.6"/><rect x="1323" y="443" width="10" height="8" stroke="none"/><rect x="1327.3" y="445.5" width="1.4" height="2.5" fill="#535353" stroke="none"/>
 </g>
</svg>
<div class="t" style="left:1361px;top:441px;font-size:9.6px;color:#a8a8a8">Fill:</div>
<div class="a obox" style="left:1381px;top:435px"></div>
<div class="a" style="left:1217px;top:459px;width:222px;height:1px;background:#3a3a3a"></div>
<div class="a" style="left:1217px;top:460px;width:222px;height:420px;background:#474747"></div>
<div class="a" style="left:1424px;top:460px;width:15px;height:420px;background:linear-gradient(90deg,#3a3a3a,#424242 40%,#404040)"></div>
<div class="a" style="left:1217px;top:879px;width:222px;height:21px;background:#535353;border-top:1px solid #5f5f5f"></div>
<svg class="a" style="left:1230px;top:881px" width="190" height="17" viewBox="1230 881 190 17">
 <g fill="#808080" stroke="#808080">
  <path d="M1240 886.5 H1237.5 A3 3 0 0 0 1237.5 892.5 H1240 M1244 886.5 H1246.5 A3 3 0 0 1 1246.5 892.5 H1244 M1238.5 889.5 H1245.5" fill="none" stroke-width="1.6"/>
  <text x="1264" y="894" font-family="Liberation Serif" font-style="italic" font-size="14" stroke="none">fx</text><path d="M1277 895 l2 0 l-1 1.2z" stroke="none"/>
  <rect x="1290.5" y="884.5" width="13" height="10" stroke="none"/><circle cx="1297" cy="889.5" r="2.8" fill="#535353" stroke="none"/>
  <circle cx="1323" cy="889.5" r="5" stroke="none"/><path d="M1319.5 893 L1326.5 886" stroke="#535353" stroke-width="1.3"/><path d="M1329 895 l2 0 l-1 1.2z" stroke="none"/>
  <path d="M1345 885 H1349.5 L1351 886.5 H1357 V894.5 H1345Z" stroke="none"/>
  <path d="M1373.5 885.5 H1384 V895 H1377 L1373.5 891.5Z" stroke="none"/><path d="M1373.5 891.5 L1377 895 V891.5Z" fill="#535353" stroke="none"/>
  <path d="M1398 886.5 H1410 M1402 886 V884.5 H1406 V886 M1399.5 887.5 L1400.5 896 H1407.5 L1408.5 887.5" fill="none" stroke-width="1.1"/><path d="M1402.5 889 v5 M1404 889 v5 M1405.5 889 v5" stroke-width="0.8"/>
 </g>
</svg>
<div class="a" style="left:1439px;top:102px;width:1px;height:798px;background:#2b2b2b"></div>

<!-- bottom mini bridge bar -->
<div class="a" style="left:40px;top:879px;width:1135px;height:21px;background:#3c3c3c;border-top:1px solid #333"></div>
<div class="a" style="left:41px;top:880px;width:70px;height:19px;background:#535353;border-top:1px solid #5f5f5f"></div>
<div class="a" style="left:111px;top:880px;width:56px;height:19px;background:#424242;border-right:1px solid #333;border-left:1px solid #333"></div>
<div class="t" style="left:48px;top:885px;font-size:10px;font-weight:700;color:#e4e4e4">Mini Bridge</div>
<div class="t" style="left:118.5px;top:885px;font-size:10px;font-weight:700;color:#9a9a9a">Timeline</div>
<svg class="a pm" style="left:1156px;top:885px" width="15" height="9"><path d="M0 3 L5 3 L2.5 6Z" fill="#dcdcdc"/><path d="M6 0.5 H14 M6 3 H14 M6 5.5 H14 M6 8 H14" stroke="#dcdcdc" stroke-width="1"/></svg>
<div class="a" style="left:0;top:899px;width:1440px;height:1px;background:#2a2a2a"></div>

<!-- ============ DIALOG ============ -->

<div class="a" id="dlgshadow" style="left:166px;top:148px;width:910px;height:688px;background:rgba(0,0,0,0.42);filter:blur(7px)"></div>
<div class="a" style="left:170px;top:150px;width:897px;height:676px;background:#303030;border-radius:5px 5px 1px 1px"></div>
<div class="a" style="left:171px;top:151px;width:895px;height:674px;border:1px solid #c9c9c9;border-right-color:#8a8a8a;border-bottom-color:#8a8a8a;border-radius:4px 4px 0 0;
background:linear-gradient(90deg,#9e9e9e 0px,#a8a8a8 40px,#949494 66px,#4a4a4a 86px,#262626 100px,#2a2a2a 250px,#323232 262px,#2b2b2b 300px,#2a2a2a 325px,#363636 350px,#2b2b2b 390px,#262626 500px,#303030 540px,#333333 600px,#2a2a2a 660px,#272727 740px,#3c3c3c 772px,#626262 820px,#6e6e6e 846px,#6a6a6a 894px)"></div>
<div class="a" style="left:1017px;top:151px;width:48px;height:20px;border-radius:0 0 4px 4px;border:1px solid #3a1a14;background:linear-gradient(180deg,#e3a593 0%,#d98b77 40%,#c0391f 52%,#b83a22 75%,#cc6a50 100%);box-shadow:inset 0 0 0 1px rgba(255,255,255,0.35)"></div>
<div class="t" style="left:1035px;top:153px;font-size:15px;font-weight:700;color:#fff;text-shadow:0 0 2px #5a1a10">&#x2716;</div>
<div class="t" style="left:175px;top:157.5px;font-size:11.5px;color:#111;text-shadow:0 0 6px rgba(220,220,220,0.9)">Preferences</div>
<!-- content -->
<div class="a" id="dlgc" style="left:173px;top:174px;width:891px;height:650px;border:1px solid #232323;background:#ececec;box-shadow:inset 1px 1px 0 #ffffff"></div>

<!-- list -->
<div class="a" style="left:184px;top:185px;width:125px;height:628px;border:1px solid #8c8c8c;background:#fff"></div>
<div class="a" style="left:185px;top:246px;width:123px;height:18px;background:#3399ff"></div>
<div class="t" style="left:190px;top:191px;font-size:10px;color:#000">General</div>
<div class="t" style="left:190px;top:211px;font-size:10px;color:#000">Interface</div>
<div class="t" style="left:190px;top:231px;font-size:10px;color:#000">File Handling</div>
<div class="t" style="left:190px;top:251px;font-size:10px;color:#000">Performance</div>
<div class="t" style="left:190px;top:271px;font-size:10px;color:#000">Cursors</div>
<div class="t" style="left:190px;top:291px;font-size:10px;color:#000">Transparency &amp; Gamut</div>
<div class="t" style="left:190px;top:311px;font-size:10px;color:#000">Units &amp; Rulers</div>
<div class="t" style="left:190px;top:331px;font-size:10px;color:#000">Guides, Grid &amp; Slices</div>
<div class="t" style="left:190px;top:351px;font-size:10px;color:#000">Plug-Ins</div>
<div class="t" style="left:190px;top:371px;font-size:10px;color:#000">Type</div>

<!-- group boxes -->
<div class="a gb" style="left:317px;top:193px;width:316px;height:279px"></div>
<div class="a gl" style="left:333px;top:186px;width:94px"></div>
<div class="t dt" style="left:339px;top:186px">Memory Usage</div>

<div class="a gb" style="left:641px;top:193px;width:320px;height:279px"></div>
<div class="a gl" style="left:656px;top:186px;width:101px"></div>
<div class="t dt" style="left:663px;top:186px">History &amp; Cache</div>

<div class="a gb" style="left:317px;top:489px;width:346px;height:142px"></div>
<div class="a gl" style="left:333px;top:482px;width:86px"></div>
<div class="t dt" style="left:339px;top:482px">Scratch Disks</div>

<div class="a gb" style="left:672px;top:489px;width:289px;height:142px"></div>
<div class="a gl" style="left:687px;top:482px;width:166px"></div>
<div class="t dt" style="left:693px;top:482px">Graphics Processor Settings</div>

<div class="a gb" style="left:317px;top:649px;width:644px;height:163px"></div>
<div class="a gl" style="left:333px;top:642px;width:73px"></div>
<div class="t dt" style="left:339px;top:642px">Description</div>

<!-- memory usage -->
<div class="t dt" style="right:979px;top:208px">Available RAM:</div>
<div class="t dt" style="left:470px;top:208px">3504 MB</div>
<div class="t dt" style="right:979px;top:232px">Ideal Range:</div>
<div class="t dt" style="left:470px;top:232px">1927-2523 MB</div>
<div class="t dt" style="right:979px;top:258px">Let Photoshop Use:</div>
<div class="a" style="left:466px;top:255px;width:53px;height:19px;background:#fff;border:1px solid #dadada;border-top-color:#c8c8c8"></div>
<div class="t dt" style="left:472px;top:258px">2382</div>
<div class="t dt" style="left:528px;top:258px">MB (68%)</div>
<div class="a" style="left:331px;top:365px;width:9px;height:2px;background:#222"></div>
<div class="a" style="left:608px;top:365px;width:10px;height:2px;background:#222"></div>
<div class="a" style="left:612px;top:361px;width:2px;height:10px;background:#222"></div>
<div class="a" style="left:350px;top:357px;width:250px;height:18px;border:1px solid #8a8a8a;background:linear-gradient(90deg,#3399ff 0,#3399ff 169px,#fff 169px)"></div>
<svg class="a" style="left:513px;top:375px" width="13" height="12" viewBox="0 0 13 12"><path d="M1.5 11.5 V6.5 L6.5 1 L11.5 6.5 V11.5 Z" fill="#dcdcdc" stroke="#777" stroke-width="1"/></svg>

<!-- history & cache -->
<div class="t dt" style="left:651px;top:208px">Optimize Cache Levels and Tile Size for</div>
<div class="t dt" style="left:651px;top:222px">documents that are:</div>
<div class="a btn" style="left:753px;top:246px;width:95px;height:18px"><span>Tall and Thin</span></div>
<div class="a btn" style="left:753px;top:274px;width:95px;height:18px"><span>Default</span></div>
<div class="a btn" style="left:753px;top:302px;width:95px;height:18px"><span>Big and Flat</span></div>
<div class="t dt" style="right:635px;top:333px">History States:</div>
<div class="t dt" style="right:635px;top:364px">Cache Levels:</div>
<div class="t dt" style="right:635px;top:395px">Cache Tile Size:</div>
<div class="a" style="left:813px;top:329px;width:69px;height:23px;border:1px solid #b8b8b8;background:#fff"></div>
<div class="a" style="left:859px;top:330px;width:22px;height:21px;border-left:1px solid #c8c8c8;background:linear-gradient(180deg,#ededed,#d6d6d6)"></div>
<div class="a" style="left:868px;top:338px;width:0;height:0;border-left:3px solid #5b6b9a;border-top:3px solid transparent;border-bottom:3px solid transparent"></div>
<div class="t dt" style="left:819px;top:334px">81</div>
<div class="a" style="left:813px;top:360px;width:69px;height:23px;border:1px solid #b8b8b8;background:#fff"></div>
<div class="a" style="left:859px;top:361px;width:22px;height:21px;border-left:1px solid #c8c8c8;background:linear-gradient(180deg,#ededed,#d6d6d6)"></div>
<div class="a" style="left:868px;top:369px;width:0;height:0;border-left:3px solid #5b6b9a;border-top:3px solid transparent;border-bottom:3px solid transparent"></div>
<div class="t dt" style="left:819px;top:365px">5</div>
<div class="a" style="left:813px;top:391px;width:68px;height:21px;border:1px solid #e2e2e2;background:#fff"></div>
<div class="t dt" style="left:820px;top:396px">1028K</div>
<div class="a" style="left:869px;top:401px;width:0;height:0;border-top:4px solid #000;border-left:4px solid transparent;border-right:4px solid transparent"></div>
<svg class="a" style="left:650px;top:425px" width="34" height="34" viewBox="0 0 34 34">
 <defs><radialGradient id="ig" cx="40%" cy="30%" r="70%"><stop offset="0" stop-color="#ffffff"/><stop offset="0.55" stop-color="#cfe3f7"/><stop offset="1" stop-color="#6f9fd0"/></radialGradient></defs>
 <path d="M17 2 C25.5 2 32 8 32 15.5 C32 23 25.5 28 18.5 28 L15 33 L13.5 27.5 C6.5 26 2 21 2 15.5 C2 8 8.5 2 17 2 Z" fill="url(#ig)" stroke="#4f7fb0" stroke-width="1"/>
 <circle cx="17" cy="8.5" r="2" fill="#1a3c9a"/><path d="M13.5 12 H18.5 V21.5 H20.5 V23.5 H13.5 V21.5 H15.5 V14 H13.5 Z" fill="#1a3c9a"/>
</svg>
<div class="t" style="left:691px;top:423px;font-size:10px;color:#111">Set Cache Levels to 2 or higher for optimum GPU</div>
<div class="t" style="left:691px;top:435px;font-size:10px;color:#111">performance.</div>

<!-- OK etc -->
<div class="a btn" style="left:977px;top:186px;width:76px;height:18px;border-color:#3c8dbf;box-shadow:inset 0 0 0 1px #8fe0fb"><span>OK</span></div>
<div class="a btn" style="left:977px;top:214px;width:76px;height:18px"><span>Cancel</span></div>
<div class="a btn" style="left:977px;top:242px;width:76px;height:18px"><span>Prev</span></div>
<div class="a btn" style="left:977px;top:270px;width:76px;height:18px"><span>Next</span></div>

<!-- scratch disks -->
<div class="a" style="left:328px;top:503px;width:299px;height:17px;border:1px solid #b5b5b5;background:#ececec"></div>
<div class="a" style="left:350px;top:504px;width:1px;height:15px;background:#b5b5b5"></div>
<div class="a" style="left:400px;top:504px;width:1px;height:15px;background:#b5b5b5"></div>
<div class="a" style="left:470px;top:504px;width:1px;height:15px;background:#b5b5b5"></div>
<div class="a" style="left:540px;top:504px;width:1px;height:15px;background:#b5b5b5"></div>
<div class="t st" style="left:356px;top:507px;font-size:9.6px">Active?</div>
<div class="t st" style="left:406px;top:507px;font-size:9.6px">Drive</div>
<div class="t st" style="left:476px;top:507px;font-size:9.6px">Free Space</div>
<div class="t st" style="left:546px;top:507px;font-size:9.6px">Information</div>
<div class="a" style="left:328px;top:519px;width:299px;height:103px;border:1px solid #8e8e8e;border-top:2px solid #9a9a9a;background:#c4c4c4"></div>
<div class="a" style="left:329px;top:521px;width:282px;height:83px;background:#fff"></div>
<div class="a" style="left:329px;top:521px;width:21px;height:83px;background:#3399ff"></div>
<div class="a" style="left:350px;top:541px;width:261px;height:1px;background:#a0a0a0"></div>
<div class="a" style="left:350px;top:562px;width:261px;height:1px;background:#a0a0a0"></div>
<div class="a" style="left:350px;top:583px;width:261px;height:1px;background:#a0a0a0"></div>
<div class="a" style="left:611px;top:521px;width:15px;height:100px;background:#ededed"></div>
<div class="a" style="left:615px;top:528px;width:0;height:0;border-bottom:4px solid #a0a0a0;border-left:4px solid transparent;border-right:4px solid transparent"></div>
<div class="a" style="left:615px;top:610px;width:0;height:0;border-top:4px solid #a0a0a0;border-left:4px solid transparent;border-right:4px solid transparent"></div>
<div class="t st" style="left:333px;top:527px">1</div>
<div class="t st" style="left:333px;top:548px">2</div>
<div class="t st" style="left:333px;top:569px">3</div>
<div class="t st" style="left:333px;top:590px">4</div>
<div class="a cb" style="left:367px;top:524px"></div>
<div class="a cb" style="left:367px;top:545px"></div>
<div class="a cb" style="left:367px;top:566px"></div>
<div class="a cb" style="left:367px;top:587px"></div>
<svg class="a" style="left:367px;top:524px" width="13" height="13"><path d="M3 6.5 L5.5 10 L10.5 2.5" fill="none" stroke="#333" stroke-width="1.6"/></svg>
<svg class="a" style="left:367px;top:545px" width="13" height="13"><path d="M3 6.5 L5.5 10 L10.5 2.5" fill="none" stroke="#333" stroke-width="1.6"/></svg>
<div class="t st" style="left:404px;top:527px;font-size:9.5px">C:\</div>
<div class="t st" style="left:404px;top:548px;font-size:9.5px">E:\</div>
<div class="t st" style="left:404px;top:569px;font-size:9.5px">G:\</div>
<div class="t st" style="left:404px;top:590px;font-size:9.5px">J:\</div>
<div class="t st" style="left:474px;top:527px;font-size:9.3px">98,97GB</div>
<div class="t st" style="left:474px;top:548px;font-size:9.3px">273,51GB</div>
<div class="t st" style="left:474px;top:569px;font-size:9.3px">20,69GB</div>
<div class="t st" style="left:474px;top:590px;font-size:9.3px">112,23GB</div>
<div class="a" style="left:639px;top:548px;width:0;height:0;border-bottom:9px solid #a8a8a8;border-left:5px solid transparent;border-right:5px solid transparent"></div>
<div class="a" style="left:639px;top:566px;width:0;height:0;border-top:9px solid #a8a8a8;border-left:5px solid transparent;border-right:5px solid transparent"></div>

<!-- graphics -->
<div class="t dt" style="left:682px;top:504px">Detected Graphics Processor:</div>
<div class="t" style="left:682px;top:529px;font-size:10px;color:#111">NVIDIA Corporation</div>
<div class="t" style="left:682px;top:541px;font-size:10px;color:#111">GeForce GTX 580/PCIe/SSE2</div>
<div class="a cb" style="left:682px;top:582px;border-color:#8f8f8f;background:linear-gradient(135deg,#dcdcdc,#fafafa)"></div>
<svg class="a" style="left:682px;top:582px" width="13" height="13"><path d="M3 6 L5.5 10 L10 2.5" fill="none" stroke="#3d5ba8" stroke-width="1.6"/></svg>
<div class="t dt" style="left:698px;top:582px">Use Graphics Processor</div>
<div class="a btn" style="left:683px;top:604px;width:135px;height:18px"><span>Advanced Settings...</span></div>
</body></html>
